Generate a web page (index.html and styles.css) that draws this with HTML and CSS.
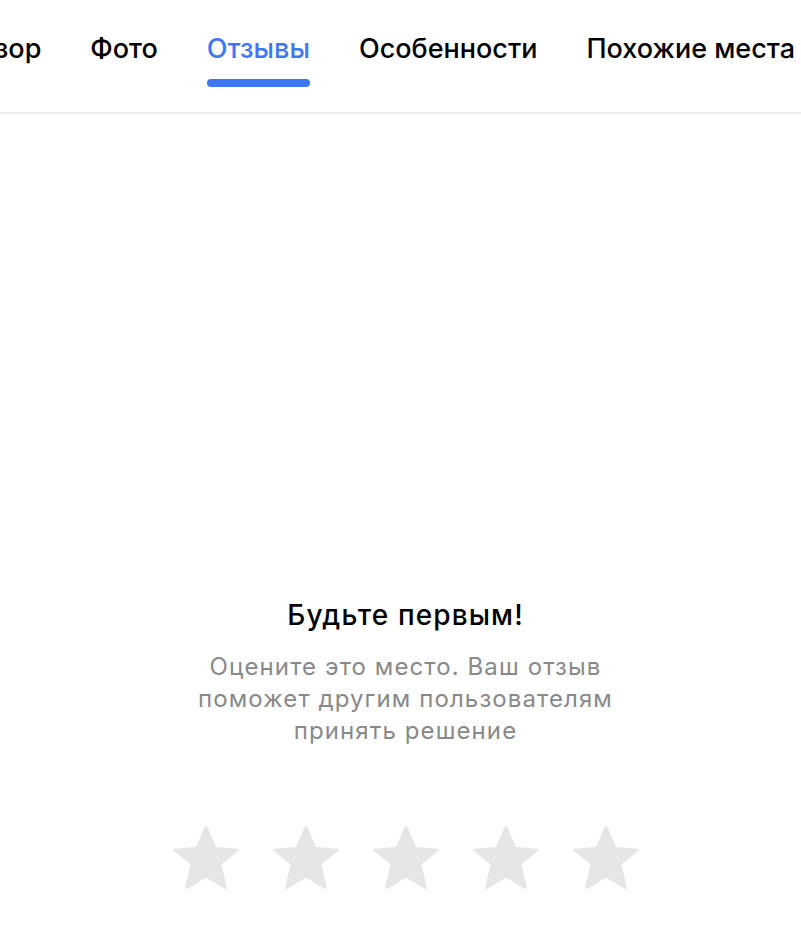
FILE: index.html
```html
<!DOCTYPE html>
<html lang="ru">
<head>
<meta charset="utf-8">
<link rel="stylesheet" href="styles.css">
</head>
<body>
<nav class="tabs">
  <div class="tab">Обзор</div>
  <div class="tab">Фото</div>
  <div class="tab tab-active">Отзывы<span class="tab-bar"></span></div>
  <div class="tab">Особенности</div>
  <div class="tab">Похожие места</div>
</nav>
<main class="empty">
  <h2 class="empty-title">Будьте первым!</h2>
  <p class="empty-text">Оцените это место. Ваш отзыв поможет другим пользователям принять решение</p>
  <div class="stars">
    <svg class="star" viewBox="0 0 68 65"><path d="M34 1.5c.8 0 1.3.5 1.6 1.2l8.3 19.4 21.2 1.6c1.5.1 1.9 1.7.8 2.6L49.5 39.3l5.2 22.8c.3 1.3-1 2.3-2.2 1.6L34 52.6 15.5 63.7c-1.2.7-2.5-.3-2.2-1.6l5.2-22.8L2.1 26.3c-1.1-.9-.7-2.5.8-2.6l21.2-1.6 8.3-19.4c.3-.7.8-1.2 1.6-1.2z"/></svg>
    <svg class="star" viewBox="0 0 68 65"><path d="M34 1.5c.8 0 1.3.5 1.6 1.2l8.3 19.4 21.2 1.6c1.5.1 1.9 1.7.8 2.6L49.5 39.3l5.2 22.8c.3 1.3-1 2.3-2.2 1.6L34 52.6 15.5 63.7c-1.2.7-2.5-.3-2.2-1.6l5.2-22.8L2.1 26.3c-1.1-.9-.7-2.5.8-2.6l21.2-1.6 8.3-19.4c.3-.7.8-1.2 1.6-1.2z"/></svg>
    <svg class="star" viewBox="0 0 68 65"><path d="M34 1.5c.8 0 1.3.5 1.6 1.2l8.3 19.4 21.2 1.6c1.5.1 1.9 1.7.8 2.6L49.5 39.3l5.2 22.8c.3 1.3-1 2.3-2.2 1.6L34 52.6 15.5 63.7c-1.2.7-2.5-.3-2.2-1.6l5.2-22.8L2.1 26.3c-1.1-.9-.7-2.5.8-2.6l21.2-1.6 8.3-19.4c.3-.7.8-1.2 1.6-1.2z"/></svg>
    <svg class="star" viewBox="0 0 68 65"><path d="M34 1.5c.8 0 1.3.5 1.6 1.2l8.3 19.4 21.2 1.6c1.5.1 1.9 1.7.8 2.6L49.5 39.3l5.2 22.8c.3 1.3-1 2.3-2.2 1.6L34 52.6 15.5 63.7c-1.2.7-2.5-.3-2.2-1.6l5.2-22.8L2.1 26.3c-1.1-.9-.7-2.5.8-2.6l21.2-1.6 8.3-19.4c.3-.7.8-1.2 1.6-1.2z"/></svg>
    <svg class="star" viewBox="0 0 68 65"><path d="M34 1.5c.8 0 1.3.5 1.6 1.2l8.3 19.4 21.2 1.6c1.5.1 1.9 1.7.8 2.6L49.5 39.3l5.2 22.8c.3 1.3-1 2.3-2.2 1.6L34 52.6 15.5 63.7c-1.2.7-2.5-.3-2.2-1.6l5.2-22.8L2.1 26.3c-1.1-.9-.7-2.5.8-2.6l21.2-1.6 8.3-19.4c.3-.7.8-1.2 1.6-1.2z"/></svg>
  </div>
</main>
</body>
</html>
```
FILE: styles.css
```css
html, body {
  margin: 0;
  padding: 0;
  background: #fff;
}
body {
  font-family: Inter, "Noto Sans", sans-serif;
  color: #000;
  overflow: hidden;
}
.tabs {
  display: flex;
  justify-content: flex-end;
  gap: 49px;
  height: 112px;
  padding-right: 6px;
  border-bottom: 2px solid #ececec;
  overflow: hidden;
  white-space: nowrap;
}
.tab {
  display: flex;
  flex-direction: column;
  align-items: stretch;
  flex-shrink: 0;
  padding-top: 31px;
  font-size: 27px;
  font-weight: 500;
  line-height: 36px;
}
.tab-active {
  color: #3f76f6;
}
.tab-bar {
  display: block;
  height: 8px;
  margin-top: 12px;
  border-radius: 4px;
  background: #3f76f6;
}
.empty {
  display: flex;
  flex-direction: column;
  align-items: center;
  padding: 482px 0 0 10px;
  text-align: center;
}
.empty-title {
  margin: 0;
  font-size: 28px;
  font-weight: 500;
  line-height: 38px;
  letter-spacing: 1.1px;
}
.empty-text {
  width: 460px;
  margin: 17px 0 0;
  font-size: 24px;
  line-height: 32px;
  letter-spacing: 1.1px;
  color: #898989;
}
.stars {
  display: flex;
  gap: 32px;
  margin-top: 78px;
}
.star {
  width: 68px;
  height: 65px;
  fill: #e6e6e6;
}
```
